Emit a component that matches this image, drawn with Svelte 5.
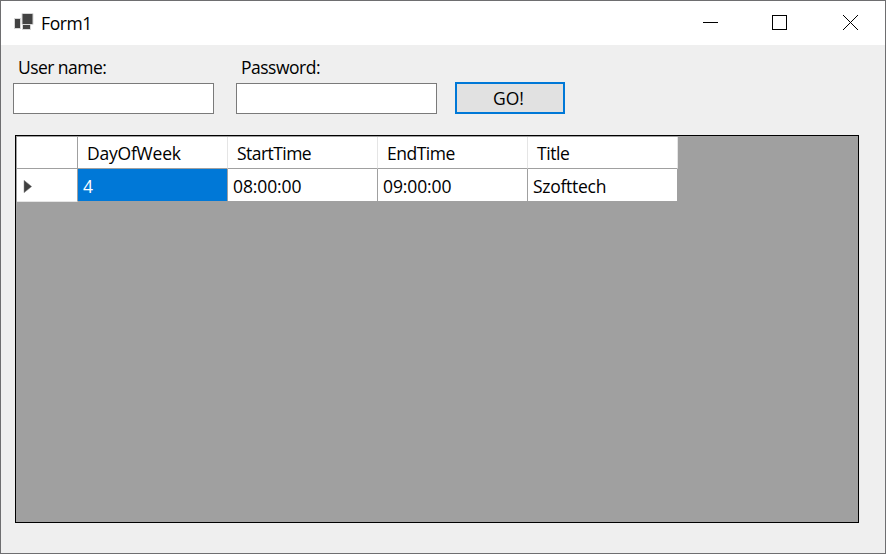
<script>
  const columns = [
    { name: 'DayOfWeek', value: '4', nameGap: -0.22, valueGap: 0 },
    { name: 'StartTime', value: '08:00:00', nameGap: -0.55, valueGap: -0.12 },
    { name: 'EndTime', value: '09:00:00', nameGap: -0.5, valueGap: -0.12 },
    { name: 'Title', value: 'Szofttech', nameGap: -0.4, valueGap: -0.28 }
  ];
</script>

<main class="window">
  <header class="titlebar">
    <svg class="logo" width="20" height="20" viewBox="0 0 20 20">
      <g fill="#424242" stroke="#d6d6d6" stroke-width="1">
        <path d="M.5 5.5h6v10h-6z" />
        <path d="M8.5 11.5h8v5h-8z" />
        <path d="M8 .5h11v11H8z" />
      </g>
    </svg>
    <span class="caption">Form1</span>
    <svg class="controls" width="156" height="16" viewBox="0 0 156 16" fill="none" stroke="#000" shape-rendering="crispEdges">
      <path d="M0 8.5h15" />
      <path d="M69.5 1.5h14v14h-14z" />
      <path d="M140 1l15 15M155 1l-15 15" shape-rendering="auto" />
    </svg>
  </header>

  <section class="form">
    <label class="field">
      <span class="user">User name:</span>
      <input type="text" />
    </label>
    <label class="field">
      <span class="pass">Password:</span>
      <input type="password" />
    </label>
    <button>GO!</button>
  </section>

  <section class="grid">
    <div class="row head">
      <div class="rowhead"></div>
      {#each columns as c}
        <div class="cell"><span style:letter-spacing="{c.nameGap}px">{c.name}</span></div>
      {/each}
    </div>
    <div class="row data">
      <div class="rowhead">
        <svg width="10" height="14" viewBox="0 0 10 14"><path d="M1 .3L8.7 6.5 1 12.7z" fill="#404040" stroke="#8a8a8a" stroke-width=".5" /></svg>
      </div>
      {#each columns as c, i}
        <div class="cell" class:selected={i === 0}><span style:letter-spacing="{c.valueGap}px">{c.value}</span></div>
      {/each}
    </div>
  </section>
</main>

<style>
  :global(body) { margin: 0; }
  .window {
    box-sizing: border-box;
    width: 886px;
    height: 554px;
    border: 1px solid #6e6e70;
    background: #efefef;
    color: #000;
    font: 17.5px/24px "Open Sans", "Noto Sans", sans-serif;
    overflow: hidden;
  }
  .titlebar {
    display: flex;
    align-items: flex-start;
    height: 44px;
    background: #fff;
  }
  .logo { margin: 12px 0 0 13px; }
  .caption { margin: 10px 0 0 7px; letter-spacing: -.4px; }
  .controls { margin: 13px 26px 0 auto; }
  .form {
    display: flex;
    align-items: flex-end;
    height: 69px;
    padding-left: 12px;
  }
  .field {
    display: flex;
    flex-direction: column;
    width: 201px;
    margin-right: 22px;
  }
  .field span { margin: 0 0 4px 5px; white-space: nowrap; }
  .user { letter-spacing: -.55px; }
  .pass { letter-spacing: -.5px; }
  input {
    box-sizing: border-box;
    width: 201px;
    height: 31px;
    margin: 0;
    padding: 0 4px;
    border: 1px solid #7a7a7a;
    background: #fff;
    outline: none;
  }
  button {
    box-sizing: border-box;
    width: 110px;
    height: 32px;
    margin: 0 0 0 -4px;
    padding: 0 3px 0 0;
    border: 2px solid #0078d7;
    background: #e1e1e1;
    color: #000;
    font: inherit;
    line-height: 28px;
  }
  .grid {
    box-sizing: border-box;
    width: 844px;
    height: 388px;
    margin: 21px 0 0 14px;
    padding: 1px 0 0 1px;
    border: 1px solid #000;
    background: #a0a0a0;
  }
  .row { display: flex; width: 661px; }
  .rowhead, .cell {
    box-sizing: border-box;
    flex: none;
    height: 100%;
    background: #fff;
    border-right: 1px solid #a0a0a0;
    white-space: nowrap;
  }
  .rowhead { width: 61px; }
  .cell { width: 150px; }
  .head { height: 32px; }
  .head > div { border-bottom: 1px solid #a0a0a0; }
  .head .cell {
    padding: 4px 0 0 9px;
    border-right-color: #e5e5e5;
  }
  .data { height: 32px; }
  .data .cell { padding: 5px 0 0 5px; }
  .data .rowhead { height: 33px; padding: 11px 0 0 6px; border-bottom: 1px solid #e5e5e5; }
  .data .rowhead svg { display: block; }
  .data .selected { background: #0078d7; color: #fff; }
</style>
